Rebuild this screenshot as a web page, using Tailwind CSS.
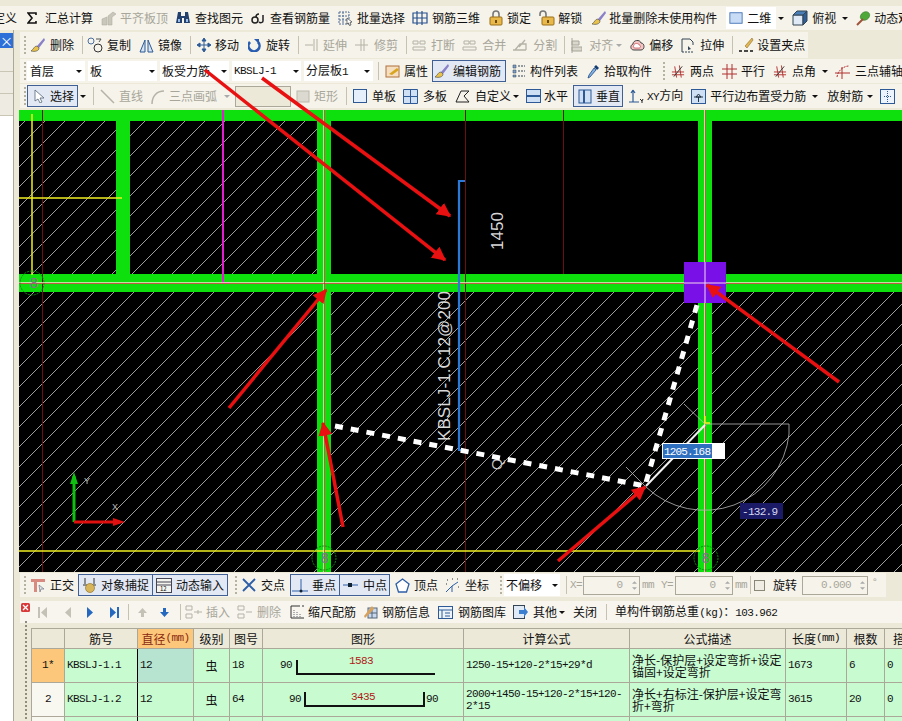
<!DOCTYPE html>
<html lang="zh">
<head>
<meta charset="utf-8">
<title>钢筋编辑</title>
<script src="https://cdn.jsdelivr.net/npm/@tailwindcss/browser@4"></script>
</head>
<body class="m-0">
<svg width="0" height="0" class="absolute">
  <defs>
    <symbol id="dd" viewBox="0 0 6 3"><path d="M0 0h6L3 3z" fill="#111"/></symbol>
    <symbol id="ddg" viewBox="0 0 6 3"><path d="M0 0h6L3 3z" fill="#aaa"/></symbol>
    <symbol id="brush" viewBox="0 0 16 16"><path d="M14 1 7 9l2 2 6-8z" fill="#8a80c8"/><path d="M7 9c-3 0-3 3-6 5 4 1 8 0 8-3z" fill="#e8c24a" stroke="#444" stroke-width=".6"/></symbol>
    <symbol id="lock" viewBox="0 0 16 16"><path d="M5 8V4a3 3 0 0 1 6 0v4" fill="none" stroke="#777" stroke-width="1.6"/><rect x="2" y="7" width="12" height="8" rx="1" fill="#e9b84a" stroke="#9a6f18"/><rect x="7" y="10" width="2" height="3" fill="#6b4b10"/></symbol>
    <symbol id="unlock" viewBox="0 0 16 16"><path d="M1 6V4a3 3 0 0 1 6 0v4" fill="none" stroke="#777" stroke-width="1.6"/><rect x="3" y="7" width="12" height="8" rx="1" fill="#e9b84a" stroke="#9a6f18"/><rect x="8" y="10" width="2" height="3" fill="#6b4b10"/></symbol>
    <symbol id="board" viewBox="0 0 16 16"><rect x="1" y="2" width="14" height="12" fill="#c9dcf6" stroke="#3d6fb4"/></symbol>
    <symbol id="cross" viewBox="0 0 15 15"><path d="M1 8h13M1 11h13M4 2l2 12M9 1l2 13" stroke="#b23030" fill="none"/><path d="M3 13 12 2" stroke="#333"/></symbol>
  </defs>
</svg>

<div class="relative w-[902px] h-[721px] overflow-hidden bg-[#ece9d8] text-[12px] leading-none text-[#111] font-['Noto_Sans_CJK_SC',sans-serif]">

  <!-- top toolbar -->
  <div class="mt-[6px] flex items-center h-[24px] bg-[#f5f3ea] whitespace-nowrap *:shrink-0">
    <span class="ml-[-7px]">定义</span>
    <svg class="ml-[10px] w-[10px] h-[12px]" viewBox="0 0 10 12"><path d="M9 3V1H1l4 5-4 5h8V9" fill="none" stroke="#111" stroke-width="1.6"/></svg>
    <span class="ml-[8px]">汇总计算</span>
    <svg class="ml-[8px] w-[16px] h-[16px]" viewBox="0 0 16 16"><path d="M1 15V9l5-2v8zM7 15V6l5-4 3 2-4 3v8z" fill="#c9c7bb" stroke="#a9a79a" stroke-width=".5"/></svg>
    <span class="ml-[3px] text-[#a8a69a]">平齐板顶</span>
    <svg class="ml-[7px] w-[16px] h-[16px]" viewBox="0 0 16 16"><path d="M3 2h3v4h4V2h3l2 11h-6V8H7v5H1z" fill="#23406f"/><path d="M3 9h2v3H3zM11 9h2v3h-2z" fill="#9bc0ee"/></svg>
    <span class="ml-[4px]">查找图元</span>
    <svg class="ml-[8px] w-[15px] h-[12px]" viewBox="0 0 15 12"><circle cx="4" cy="8" r="3" fill="none" stroke="#222" stroke-width="1.5"/><path d="M5 5c0-3 2-3 3-3M12 3v6c0 2-3 2-4 1" fill="none" stroke="#222" stroke-width="1.5"/></svg>
    <span class="ml-[4px]">查看钢筋量</span>
    <svg class="ml-[8px] w-[15px] h-[16px]" viewBox="0 0 15 16"><path d="M1 2h10v12H1zM1 6h10M1 10h10M5 2v12" fill="none" stroke="#556f96" stroke-dasharray="2 1"/><path d="m9 8 5 4-2 .5 1 2.500-1.500.5-1-2.500-1.500 1z" fill="#fff" stroke="#222" stroke-width=".6"/></svg>
    <span class="ml-[4px]">批量选择</span>
    <svg class="ml-[7px] w-[16px] h-[16px]" viewBox="0 0 16 16"><path d="M1 3h14v10H1zM5 1v14M10 1v14M1 8h14" fill="none" stroke="#27508e" stroke-width="1.200"/></svg>
    <span class="ml-[4px]">钢筋三维</span>
    <svg class="ml-[8px] w-[16px] h-[16px]"><use href="#lock"/></svg>
    <span class="ml-[3px]">锁定</span>
    <svg class="ml-[8px] w-[16px] h-[16px]"><use href="#unlock"/></svg>
    <span class="ml-[3px]">解锁</span>
    <svg class="ml-[9px] w-[16px] h-[16px]"><use href="#brush"/></svg>
    <span class="ml-[2px]">批量删除未使用构件</span>
    <div class="ml-[9px] w-[50px] h-[22px] bg-white flex items-center pl-[3px]">
      <svg class="w-[14px] h-[14px] shrink-0"><use href="#board"/></svg><span class="ml-[4px]">二维</span>
    </div>
    <svg class="ml-[2px] w-[6px] h-[3px]"><use href="#dd"/></svg>
    <svg class="ml-[8px] w-[16px] h-[16px]" viewBox="0 0 16 16"><path d="M1 5h10v10H1z" fill="#dfeaf6" stroke="#345"/><path d="m1 5 4-4h10l-4 4z" fill="#4a7fb8" stroke="#345"/><path d="m11 5 4-4v10l-4 4z" fill="#2f5f94" stroke="#345"/></svg>
    <span class="ml-[4px]">俯视</span>
    <svg class="ml-[6px] w-[6px] h-[3px]"><use href="#dd"/></svg>
    <svg class="ml-[8px] w-[15px] h-[16px]" viewBox="0 0 15 16"><ellipse cx="9" cy="6" rx="5" ry="4" transform="rotate(-35 9 6)" fill="#4fa83a" stroke="#2c6d22" stroke-width=".5"/><path d="m7 9-6 6" stroke="#a0523a" stroke-width="2"/></svg>
    <span class="ml-[3px]">动态观察</span>
  </div>

  <div class="flex">
    <!-- left side strip -->
    <aside class="w-[14px] h-[691px] shrink-0 border-r border-[#aca899] flex flex-col">
      <div class="mt-[3px] h-[15px] bg-[#2b6fd8] text-white flex items-center justify-center text-[13px]">×</div>
      <div class="mt-[2px] h-[22px] bg-[#eeece2] border-b border-[#c9c6b6]"></div>
      <div class="h-[22px] bg-[#eeece2] border-b border-[#c9c6b6]"></div>
      <div class="h-[22px] bg-[#eeece2] border-b border-[#c9c6b6]"></div>
      <div class="flex-1 bg-white"></div>
    </aside>

    <main class="pl-[5px] w-[888px] shrink-0">
      <!-- edit toolbar -->
      <div class="mt-[2px] ml-px w-[788px] h-[26px] bg-[#f5f3ea] flex items-center whitespace-nowrap *:shrink-0">
        <span class="ml-[4px] w-[2px] h-[18px] border-l-2 border-dotted border-[#b5b2a2]"></span>
        <svg class="ml-[4px] w-[16px] h-[16px]"><use href="#brush"/></svg>
        <span class="ml-[4px]">删除</span>
        <span class="ml-[8px] w-px h-[18px] bg-[#c5c2b2]"></span>
        <svg class="ml-[4px] w-[16px] h-[16px]" viewBox="0 0 16 16"><circle cx="4" cy="4" r="3" fill="none" stroke="#4a6fa0"/><circle cx="11" cy="11" r="4" fill="none" stroke="#333"/><path d="M9 2h5l-2 3" fill="none" stroke="#555"/></svg>
        <span class="ml-[4px]">复制</span>
        <svg class="ml-[8px] w-[15px] h-[15px]" viewBox="0 0 15 15"><path d="M6 2v12H1zM9 2v12h5z" fill="#d6e4f4" stroke="#2d5a96"/></svg>
        <span class="ml-[4px]">镜像</span>
        <span class="ml-[8px] w-px h-[18px] bg-[#c5c2b2]"></span>
        <svg class="ml-[6px] w-[14px] h-[14px]" viewBox="0 0 14 14"><path d="M7 1v12M1 7h12M7 0 5 3h4zM7 14l-2-3h4zM0 7l3-2v4zM14 7l-3-2v4z" fill="#2d5a96" stroke="#2d5a96"/></svg>
        <span class="ml-[4px]">移动</span>
        <svg class="ml-[9px] w-[13px] h-[14px]" viewBox="0 0 13 14"><path d="M2 4a5.500 5.500 0 1 0 8 0" fill="none" stroke="#2a5db0" stroke-width="2.600"/><path d="M6 1h5v5z" fill="#2a5db0"/></svg>
        <span class="ml-[5px]">旋转</span>
        <span class="ml-[8px] w-px h-[18px] bg-[#c5c2b2]"></span>
        <svg class="ml-[6px] w-[13px] h-[14px]" viewBox="0 0 13 14"><path d="M0 7h8M9 1v12M12 1v12" stroke="#b5b3a7" fill="none"/></svg>
        <span class="ml-[5px] text-[#a8a69a]">延伸</span>
        <svg class="ml-[8px] w-[13px] h-[14px]" viewBox="0 0 13 14"><path d="M0 7h13M6 1v12M9 1v12" stroke="#b5b3a7" fill="none"/></svg>
        <span class="ml-[6px] text-[#a8a69a]">修剪</span>
        <span class="ml-[8px] w-px h-[18px] bg-[#c5c2b2]"></span>
        <svg class="ml-[4px] w-[16px] h-[14px]" viewBox="0 0 16 14"><path d="M2 3h5v3H2zM9 3h5v3H9zM2 9h12v3H2z" fill="none" stroke="#b5b3a7"/></svg>
        <span class="ml-[4px] text-[#a8a69a]">打断</span>
        <svg class="ml-[7px] w-[15px] h-[14px]" viewBox="0 0 15 14"><path d="M2 3h5v3H2zM8 3h5v3H8zM1 9h13v3H1z" fill="none" stroke="#b5b3a7"/></svg>
        <span class="ml-[5px] text-[#a8a69a]">合并</span>
        <svg class="ml-[6px] w-[16px] h-[15px]" viewBox="0 0 16 15"><path d="M1 12h13M3 12l5-6h6v6M13 2 7 9" fill="none" stroke="#b5b3a7" stroke-width="1.300"/></svg>
        <span class="ml-[5px] text-[#a8a69a]">分割</span>
        <span class="ml-[7px] w-px h-[18px] bg-[#c5c2b2]"></span>
        <svg class="ml-[6px] w-[11px] h-[15px]" viewBox="0 0 11 15"><path d="M1 0v15M1 3h7v4H1zM1 9h10v4H1z" fill="#dad8cc" stroke="#a8a69a"/></svg>
        <span class="ml-[7px] text-[#a8a69a]">对齐</span>
        <svg class="ml-[3px] w-[6px] h-[3px]"><use href="#ddg"/></svg>
        <svg class="ml-[8px] w-[15px] h-[14px]" viewBox="0 0 15 14"><path d="M4 12C0 12 0 7 3 6c0-4 7-5 8-1 4 0 4 7 0 7z" fill="#f3c4c4" stroke="#444"/><path d="M5 10c-2 0-2-2-1-3 0-2 5-2 5 0 2 0 2 3 0 3z" fill="#fff" stroke="#b33" stroke-width=".6"/></svg>
        <span class="ml-[4px]">偏移</span>
        <svg class="ml-[8px] w-[15px] h-[15px]" viewBox="0 0 15 15"><path d="M1 14V1h8l3 3v3" fill="none" stroke="#345"/><path d="M1 14h12" stroke="#345" stroke-dasharray="2 1"/><path d="M7 8v4l3-1z" fill="#345"/></svg>
        <span class="ml-[4px]">拉伸</span>
        <span class="ml-[8px] w-px h-[18px] bg-[#c5c2b2]"></span>
        <svg class="ml-[5px] w-[16px] h-[16px]" viewBox="0 0 16 16"><path d="M14 1 7 9l2 2 6-8z" fill="#e3b650" stroke="#7a5d1a" stroke-width=".5"/><path d="M1 14h3M6 14h4M12 14h3" stroke="#111" stroke-width="1.600"/></svg>
        <span class="ml-[3px]">设置夹点</span>
      </div>

      <!-- selectors row -->
      <div class="mt-px ml-px h-[24px] flex items-center whitespace-nowrap *:shrink-0 bg-[#f5f3ea]">
        <span class="ml-[4px] w-[2px] h-[18px] border-l-2 border-dotted border-[#b5b2a2]"></span>
        <div class="ml-px w-[58px] h-[20px] bg-white flex items-center justify-between pl-[3px] pr-[3px]"><span>首层</span><svg class="w-[6px] h-[3px]"><use href="#dd"/></svg></div>
        <div class="ml-[3px] w-[69px] h-[20px] bg-white flex items-center justify-between pl-[2px] pr-[2px]"><span>板</span><svg class="w-[6px] h-[3px]"><use href="#dd"/></svg></div>
        <div class="ml-[3px] w-[69px] h-[20px] bg-white flex items-center justify-between pl-[2px] pr-[2px]"><span>板受力筋</span><svg class="w-[6px] h-[3px]"><use href="#dd"/></svg></div>
        <div class="ml-[3px] w-[69px] h-[20px] bg-white flex items-center justify-between pl-[2px] pr-[2px]"><span class="font-['Liberation_Mono'] text-[11px] tracking-[-0.6px]">KBSLJ-1</span><svg class="w-[6px] h-[3px]"><use href="#dd"/></svg></div>
        <div class="ml-[3px] w-[69px] h-[20px] bg-white flex items-center justify-between pl-[2px] pr-[3px]"><span>分层板<span class="font-['Liberation_Mono'] text-[11px]">1</span></span><svg class="w-[6px] h-[3px]"><use href="#dd"/></svg></div>
        <span class="ml-[5px] w-px h-[18px] bg-[#c5c2b2]"></span>
        <svg class="ml-[6px] w-[15px] h-[14px]" viewBox="0 0 15 14"><rect x="1" y="2" width="13" height="11" fill="#f6dfc0" stroke="#b0703a"/><path d="m4 10 8-6 2 2-7 5z" fill="#d9a520"/></svg>
        <span class="ml-[4px]">属性</span>
        <div class="ml-[4px] w-[74px] h-[22px] bg-[#e3e9f4] border border-[#3f5f95] flex items-center pl-[1px]">
          <svg class="w-[16px] h-[16px] shrink-0"><use href="#brush"/></svg><span class="ml-[3px]">编辑钢筋</span>
        </div>
        <svg class="ml-[6px] w-[14px] h-[14px]" viewBox="0 0 14 14"><path d="M1 1h3v3H1zM1 6h3v3H1zM1 11h3v2H1z" fill="#7f9fca" stroke="#345" stroke-width=".5"/><path d="M6 2h7M6 7h7M6 12h7" stroke="#345" stroke-dasharray="2 1" stroke-width="1.200"/></svg>
        <span class="ml-[4px]">构件列表</span>
        <svg class="ml-[9px] w-[13px] h-[15px]" viewBox="0 0 13 15"><path d="M9 1l3 3-2 2-3-3z" fill="#123c72"/><path d="M7 4l2 2-6 7-2 1 1-3z" fill="#7fb0e6" stroke="#123c72" stroke-width=".7"/></svg>
        <span class="ml-[4px]">拾取构件</span>
        <span class="ml-[11px] w-[2px] h-[18px] border-l-2 border-dotted border-[#b5b2a2]"></span>
        <svg class="ml-[6px] w-[14px] h-[15px]"><use href="#cross"/></svg>
        <span class="ml-[5px]">两点</span>
        <svg class="ml-[8px] w-[15px] h-[15px]" viewBox="0 0 15 15"><path d="M0 5h15M0 10h15M5 0v15M10 0v15" stroke="#b23030" fill="none"/></svg>
        <span class="ml-[4px]">平行</span>
        <svg class="ml-[8px] w-[14px] h-[15px]"><use href="#cross"/></svg>
        <span class="ml-[5px]">点角</span>
        <svg class="ml-[6px] w-[6px] h-[3px]"><use href="#dd"/></svg>
        <svg class="ml-[7px] w-[15px] h-[15px]" viewBox="0 0 15 15"><path d="M0 9h15M7 3v12" stroke="#b23030" fill="none"/><path d="M2 13C3 6 9 2 14 2" fill="none" stroke="#b23030" stroke-dasharray="2 1"/></svg>
        <span class="ml-[5px]">三点辅轴</span>
      </div>

      <!-- draw row -->
      <div class="mt-px ml-px h-[24px] flex items-center whitespace-nowrap *:shrink-0 bg-[#f5f3ea]">
        <span class="ml-[4px] w-[2px] h-[18px] border-l-2 border-dotted border-[#b5b2a2]"></span>
        <div class="ml-px w-[51px] h-[22px] bg-[#e3e9f4] border border-[#3f5f95] flex items-center pl-[5px]">
          <svg class="w-[13px] h-[14px] shrink-0" viewBox="0 0 13 14"><path d="M2 1v11l3-2 2 4 2-1-2-4h4z" fill="#fff" stroke="#567" stroke-width=".8"/></svg><span class="ml-[4px]">选择</span>
        </div>
        <svg class="ml-[2px] w-[6px] h-[3px]"><use href="#dd"/></svg>
        <span class="ml-[7px] w-px h-[18px] bg-[#c5c2b2]"></span>
        <svg class="ml-[6px] w-[15px] h-[15px]" viewBox="0 0 15 15"><path d="m1 1 13 13" stroke="#b5b3a7" stroke-width="1.500"/></svg>
        <span class="ml-[4px] text-[#a8a69a]">直线</span>
        <svg class="ml-[7px] w-[15px] h-[15px]" viewBox="0 0 15 15"><path d="M2 15C2 7 7 2 14 2" fill="none" stroke="#b5b3a7" stroke-width="1.500"/></svg>
        <span class="ml-[4px] text-[#a8a69a]">三点画弧</span>
        <svg class="ml-[7px] w-[6px] h-[3px]"><use href="#ddg"/></svg>
        <div class="ml-[5px] w-[56px] h-[21px] bg-[#ece9d8] border border-[#aca899]"></div>
        <svg class="ml-[5px] w-[14px] h-[13px]" viewBox="0 0 14 13"><rect x="1" y="1" width="12" height="11" fill="#dcdad0" stroke="#bbb9ad"/></svg>
        <span class="ml-[4px] text-[#a8a69a]">矩形</span>
        <span class="ml-[8px] w-px h-[18px] bg-[#c5c2b2]"></span>
        <svg class="ml-[6px] w-[14px] h-[14px]" viewBox="0 0 14 14"><rect x=".5" y=".5" width="13" height="13" fill="#e4effb" stroke="#2d5a96"/></svg>
        <span class="ml-[5px]">单板</span>
        <svg class="ml-[7px] w-[15px] h-[15px]" viewBox="0 0 15 15"><path d="M.5.5h14v14H.5zM7.500.5v14M.5 7.500h14" fill="#cfe0f5" stroke="#2d5a96"/></svg>
        <span class="ml-[5px]">多板</span>
        <svg class="ml-[8px] w-[15px] h-[13px]" viewBox="0 0 15 13"><path d="M6 1h8L9 6l5 6H1z" fill="none" stroke="#222"/></svg>
        <span class="ml-[5px]">自定义</span>
        <svg class="ml-[2px] w-[6px] h-[3px]"><use href="#dd"/></svg>
        <svg class="ml-[7px] w-[15px] h-[14px]" viewBox="0 0 15 14"><rect x=".5" y=".5" width="14" height="13" fill="#cfe0f5" stroke="#2d5a96"/><path d="M1 7h13" stroke="#2d5a96" stroke-width="2"/></svg>
        <span class="ml-[3px]">水平</span>
        <div class="ml-[5px] w-[50px] h-[22px] bg-[#e3e9f4] border border-[#3f5f95] flex items-center pl-[3px]">
          <svg class="w-[16px] h-[15px] shrink-0" viewBox="0 0 16 15"><rect x="2" y="1" width="12" height="13" fill="#cfe0f5" stroke="#2d5a96"/><path d="M7 1v13" stroke="#2d5a96" stroke-width="2"/></svg><span class="ml-[3px]">垂直</span>
        </div>
        <svg class="ml-[5px] w-[16px] h-[15px]" viewBox="0 0 16 15"><path d="M5 1v12M1 13h10M5 1 3 4M5 1l2 3" fill="none" stroke="#2d5a96" stroke-width="1.200"/><path d="m12 10 2 2 1-2M14 12v2" stroke="#222" fill="none"/></svg>
        <span class="ml-[3px]"><span class="font-['Liberation_Mono'] text-[11px] tracking-[-0.6px]">XY</span>方向</span>
        <svg class="ml-[8px] w-[15px] h-[15px]" viewBox="0 0 15 15"><rect x=".5" y=".5" width="14" height="14" fill="#cfe0f5" stroke="#2d5a96"/><path d="M3 8h9M7.500 5 5 8h5zM7.500 8v5" stroke="#234" fill="none"/></svg>
        <span class="ml-[4px]">平行边布置受力筋</span>
        <svg class="ml-[6px] w-[6px] h-[3px]"><use href="#dd"/></svg>
        <span class="ml-[9px]">放射筋</span>
        <svg class="ml-[4px] w-[6px] h-[3px]"><use href="#dd"/></svg>
        <svg class="ml-[7px] w-[15px] h-[15px]" viewBox="0 0 15 15"><rect x=".5" y=".5" width="14" height="14" fill="#eef4fb" stroke="#2d5a96"/><path d="M7.500 2v11M4 7.500h7" stroke="#2d5a96" stroke-dasharray="1 1"/></svg>
      </div>

      <!-- drawing canvas -->
      <svg class="mt-[2px] block w-[883px] h-[462px]" viewBox="19 110 883 462" font-family="Liberation Sans">
        <defs>
          <pattern id="hatch" width="20" height="20" patternUnits="userSpaceOnUse" x="5" y="1"><path d="M-1 21 21-1" stroke="#e4e4e4" stroke-width=".7"/></pattern>
        </defs>
        <rect x="19" y="110" width="883" height="462" fill="#000"/>
        <rect x="19" y="121" width="97" height="153" fill="url(#hatch)"/>
        <rect x="130" y="121" width="187" height="153" fill="url(#hatch)"/>
        <rect x="19" y="292" width="883" height="280" fill="url(#hatch)"/>
        <g fill="#0de00d">
          <rect x="19" y="110" width="883" height="11"/>
          <rect x="116" y="121" width="14" height="153"/>
          <rect x="19" y="274" width="883" height="18"/>
          <rect x="317" y="110" width="14" height="462"/>
          <rect x="698" y="110" width="14" height="462"/>
        </g>
        <path d="M42.500 110v462M465.500 110v462M563.500 110v164" stroke="#6a1010" fill="none"/>
        <path d="M32 114v161M19 198h103M19 551h681" stroke="#f0f020" stroke-width="1.500" fill="none"/>
        <path d="M223 110v173h7" stroke="#e020d0" stroke-width="2" fill="none"/>
        <path d="M19 283h883M324 110v462M705 110v462" stroke="#f4e8d0" stroke-width="1.500" fill="none"/>
        <path d="M19 283.500h883M324.500 110v462M705.500 110v462" stroke="#c02020" stroke-width=".7" fill="none"/>
        <rect x="684" y="262" width="42" height="41" fill="#7a10e8"/>
        <path d="M684 283h42M705 262v41" stroke="#f4d8e8" stroke-width="1"/>
        <path d="M465 181h-6v269h6" stroke="#2a78d8" stroke-width="2.200" fill="none"/>
        <text x="0" y="0" transform="translate(503 250) rotate(-90)" font-size="17" fill="#d8d8d8" textLength="38">1450</text>
        <text x="0" y="0" transform="translate(450 441) rotate(-90)" font-size="17" fill="#d8d8d8" textLength="150">KBSLJ-1.C12@200</text>
        <text x="0" y="0" transform="translate(502 470) rotate(-90)" font-size="15" fill="#c8c8c8">Q</text>
        <path d="M335 426 645 486 697 305" fill="none" stroke="#fff" stroke-width="5" stroke-dasharray="8 8"/>
        <g fill="none" stroke="#b8b8b8" stroke-width=".8">
          <path d="M705 424h84v10A85 85 0 0 1 646 487"/>
          <path d="M684 404l21 20M626 467l20 20"/>
        </g>
        <path d="M705 425 646 486" stroke="#f0f0f0" stroke-width="2"/>
        <path d="M705 416v7h5" stroke="#f0f020" stroke-width="1.500" fill="none"/>
        <rect x="662" y="443" width="63" height="16" fill="#fff"/>
        <rect x="663" y="444" width="49" height="14" fill="#2f6fc0"/>
        <text x="664" y="455" font-size="11" fill="#fff" font-family="Liberation Mono" textLength="47">1205.168</text>
        <rect x="740" y="503" width="43" height="16" fill="#1a1a66"/>
        <text x="742" y="515" font-size="11" fill="#d8d8f0" font-family="Liberation Mono" textLength="36">-132.9</text>
        <g fill="none" stroke="#108a10" stroke-dasharray="2 1"><circle cx="32" cy="283" r="12"/><circle cx="324" cy="558" r="12"/><circle cx="706" cy="558" r="12"/></g>
        <g font-size="14" fill="#8a6b90" font-family="Liberation Mono" text-anchor="middle"><text x="34" y="288">8</text><text x="325" y="563">8</text><text x="706" y="563">8</text></g>
        <path d="M74 522V476" stroke="#10c010" stroke-width="3"/><path d="M74 472l-4 12h8z" fill="#10c010"/>
        <path d="M74 522h46" stroke="#e01010" stroke-width="3"/><path d="M125 522l-12-4v8z" fill="#e01010"/>
        <text x="84" y="484" font-size="9" fill="#bbb">Y</text>
        <text x="112" y="510" font-size="9" fill="#bbb">X</text>
      </svg>

      <!-- snap toolbar -->
      <div class="mt-px ml-px w-[866px] h-[24px] flex items-center whitespace-nowrap *:shrink-0 bg-[#f5f3ea]">
        <span class="ml-[4px] w-[2px] h-[18px] border-l-2 border-dotted border-[#b5b2a2]"></span>
        <svg class="ml-[4px] w-[16px] h-[16px]" viewBox="0 0 16 16"><path d="M1 2h14v3H1zM4 5h3v10H4z" fill="#d88a80"/><path d="m9 8 5 4h-3l-1 3z" fill="#dfe5ec" stroke="#667" stroke-width=".6"/></svg>
        <span class="ml-[4px]">正交</span>
        <div class="ml-[4px] w-[75px] h-[22px] bg-[#e3e9f4] border border-[#3f5f95] flex items-center pl-[3px]">
          <svg class="w-[15px] h-[16px] shrink-0" viewBox="0 0 15 16"><path d="M3 1v6M12 1v6" stroke="#333"/><path d="M1 8h4M10 8h4" stroke="#333"/><circle cx="8" cy="11" r="4.500" fill="#d8b45a" stroke="#86691f" stroke-width=".6"/></svg><span class="ml-[4px]">对象捕捉</span>
        </div>
        <div class="w-[75px] h-[22px] bg-[#e3e9f4] border border-l-0 border-[#3f5f95] flex items-center pl-[3px]">
          <svg class="w-[16px] h-[15px] shrink-0" viewBox="0 0 16 15"><rect x=".5" y=".5" width="15" height="14" fill="#f4f4ee" stroke="#445"/><path d="M.5 4h15M.5 7h15" stroke="#445"/><text x="4" y="13" font-size="6" fill="#111">12</text></svg><span class="ml-[4px]">动态输入</span>
        </div>
        <span class="ml-[7px] w-[2px] h-[18px] border-l-2 border-dotted border-[#b5b2a2]"></span>
        <svg class="ml-[5px] w-[14px] h-[14px]" viewBox="0 0 14 14"><path d="m1 1 12 12M13 1 1 13" stroke="#2d5fa8" stroke-width="1.800"/></svg>
        <span class="ml-[5px]">交点</span>
        <div class="ml-[5px] w-[50px] h-[22px] bg-[#e3e9f4] border border-[#3f5f95] flex items-center pl-[1px]">
          <svg class="w-[16px] h-[15px] shrink-0" viewBox="0 0 16 15"><path d="M0 13h16M9 1v12" stroke="#2d5fa8" fill="none"/><circle cx="9" cy="13" r="1.500" fill="#123"/></svg><span class="ml-[4px]">垂点</span>
        </div>
        <div class="w-[50px] h-[22px] bg-[#e3e9f4] border border-l-0 border-[#3f5f95] flex items-center pl-[3px]">
          <svg class="w-[15px] h-[6px] shrink-0" viewBox="0 0 15 6"><path d="M0 3h15" stroke="#2d5fa8"/><rect x="5" y="1" width="4" height="4" fill="#123"/></svg><span class="ml-[5px]">中点</span>
        </div>
        <svg class="ml-[5px] w-[15px] h-[15px]" viewBox="0 0 15 15"><path d="M7.500 1 14 6l-2.500 8h-8L1 6z" fill="#fff" stroke="#2d5fa8" stroke-width="1.300"/></svg>
        <span class="ml-[4px]">顶点</span>
        <svg class="ml-[7px] w-[15px] h-[15px]" viewBox="0 0 15 15"><path d="M7 8v6M1 14l6-6 6-4" stroke="#2d5fa8" fill="none"/><path d="M2 2h1M7 1h1M12 1h1M1 6h1M13 9h1" stroke="#333"/></svg>
        <span class="ml-[5px]">坐标</span>
        <span class="ml-[11px] w-[2px] h-[18px] border-l-2 border-dotted border-[#b5b2a2]"></span>
        <div class="ml-[2px] w-[56px] h-[22px] bg-white flex items-center justify-between pl-[2px] pr-[2px]"><span>不偏移</span><svg class="w-[6px] h-[3px]"><use href="#dd"/></svg></div>
        <span class="ml-[6px] w-px h-[18px] bg-[#c5c2b2]"></span>
        <span class="ml-[3px] w-[12px] font-['Liberation_Mono'] text-[11px] tracking-[-0.6px] text-[#a8a69a]">X=</span>
        <div class="ml-px w-[57px] h-[19px] border border-[#aca899] flex items-center justify-end pr-[2px] text-[#a8a69a]"><span class="font-['Liberation_Mono'] text-[11px]">0</span><span class="ml-[9px] flex flex-col gap-[3px]"><svg class="w-[5px] h-[3px] rotate-180"><use href="#ddg"/></svg><svg class="w-[5px] h-[3px]"><use href="#ddg"/></svg></span></div>
        <span class="ml-[2px] w-[12px] font-['Liberation_Mono'] text-[11px] tracking-[-0.6px] text-[#a8a69a]">mm</span>
        <span class="ml-[7px] w-[12px] font-['Liberation_Mono'] text-[11px] tracking-[-0.6px] text-[#a8a69a]">Y=</span>
        <div class="ml-[2px] w-[58px] h-[19px] border border-[#aca899] flex items-center justify-end pr-[2px] text-[#a8a69a]"><span class="font-['Liberation_Mono'] text-[11px]">0</span><span class="ml-[9px] flex flex-col gap-[3px]"><svg class="w-[5px] h-[3px] rotate-180"><use href="#ddg"/></svg><svg class="w-[5px] h-[3px]"><use href="#ddg"/></svg></span></div>
        <span class="ml-[2px] w-[12px] font-['Liberation_Mono'] text-[11px] tracking-[-0.6px] text-[#a8a69a]">mm</span>
        <span class="ml-[3px] w-px h-[18px] bg-[#c5c2b2]"></span>
        <span class="ml-[3px] w-[11px] h-[11px] border border-[#8a8778] bg-[#f0eee4]"></span>
        <span class="ml-[8px]">旋转</span>
        <div class="ml-[5px] w-[66px] h-[19px] border border-[#aca899] flex items-center justify-end pr-[2px] text-[#a8a69a]"><span class="font-['Liberation_Mono'] text-[11px] tracking-[-0.6px]">0.000</span><span class="ml-[9px] flex flex-col gap-[3px]"><svg class="w-[5px] h-[3px] rotate-180"><use href="#ddg"/></svg><svg class="w-[5px] h-[3px]"><use href="#ddg"/></svg></span></div>
        <span class="ml-[5px] text-[#a8a69a] self-start mt-[4px] text-[10px]">°</span>
      </div>

      <!-- table toolbar -->
      <div class="mt-[4px] ml-px h-[22px] flex items-center whitespace-nowrap *:shrink-0 bg-[#f7f5ee]">
        <svg class="ml-px w-[9px] h-[9px] self-start mt-[2px]" viewBox="0 0 9 9"><rect width="9" height="9" rx="1.500" fill="#d83a3a"/><path d="m2 2 5 5M7 2 2 7" stroke="#fff" stroke-width="1.300"/></svg>
        <svg class="ml-[8px] w-[9px] h-[11px]" viewBox="0 0 9 11"><path d="M0 0h2v11H0zM9 0v11L3 5.500z" fill="#c4c2b6"/></svg>
        <svg class="ml-[18px] w-[6px] h-[11px]" viewBox="0 0 6 11"><path d="M6 0v11L0 5.500z" fill="#c4c2b6"/></svg>
        <svg class="ml-[16px] w-[6px] h-[11px]" viewBox="0 0 6 11"><path d="M0 0v11l6-5.500z" fill="#2468c0"/></svg>
        <svg class="ml-[17px] w-[9px] h-[11px]" viewBox="0 0 9 11"><path d="M0 0v11l6-5.500zM7 0h2v11H7z" fill="#2468c0"/></svg>
        <span class="ml-[9px] w-px h-[16px] bg-[#c5c2b2]"></span>
        <svg class="ml-[9px] w-[9px] h-[9px]" viewBox="0 0 9 9"><path d="M4.500 0 9 5H6v4H3V5H0z" fill="#c4c2b6"/></svg>
        <svg class="ml-[13px] w-[9px] h-[9px]" viewBox="0 0 9 9"><path d="M4.500 9 9 4H6V0H3v4H0z" fill="#2468c0"/></svg>
        <span class="ml-[11px] w-px h-[16px] bg-[#c5c2b2]"></span>
        <svg class="ml-[4px] w-[18px] h-[14px]" viewBox="0 0 18 14"><path d="M1 1h6v4H1zM1 9h6v4H1z" fill="none" stroke="#b5b3a7"/><path d="M9 7h8M13 5v4" stroke="#b5b3a7"/></svg>
        <span class="ml-[3px] text-[#a8a69a]">插入</span>
        <svg class="ml-[7px] w-[15px] h-[14px]" viewBox="0 0 15 14"><path d="M1 1h6v4H1zM1 9h6v4H1z" fill="none" stroke="#b5b3a7"/><path d="M9 7h6" stroke="#b5b3a7"/></svg>
        <span class="ml-[5px] text-[#a8a69a]">删除</span>
        <svg class="ml-[9px] w-[15px] h-[14px]" viewBox="0 0 15 14"><path d="M1 1v12h13M1 1h9M12 1h2" fill="none" stroke="#333"/><path d="M4 5v7M7 7v5M10 9v3" stroke="#667" stroke-dasharray="1 1"/></svg>
        <span class="ml-[3px]">缩尺配筋</span>
        <svg class="ml-[7px] w-[15px] h-[15px]" viewBox="0 0 15 15"><rect x="5" y="3" width="9" height="10" fill="#c8d8ee" stroke="#567"/><path d="M9 3v10M5 8h9" stroke="#567"/><path d="m9 1-8 10 1 2 9-9z" fill="#d8a25a"/></svg>
        <span class="ml-[4px]">钢筋信息</span>
        <svg class="ml-[8px] w-[15px] h-[13px]" viewBox="0 0 15 13"><rect x=".5" y=".5" width="14" height="12" fill="#eef3fa" stroke="#2d5a96"/><path d="M.5 4h14M4 4v8M7 7h5M7 10h5" stroke="#2d5a96"/></svg>
        <span class="ml-[5px]">钢筋图库</span>
        <svg class="ml-[7px] w-[15px] h-[14px]" viewBox="0 0 15 14"><rect x=".5" y=".5" width="11" height="13" fill="#dfeaf6" stroke="#345"/><path d="m6 5h5V2l4 5-4 5V9H6z" fill="#3c7fd0"/></svg>
        <span class="ml-[5px]">其他</span>
        <svg class="ml-[2px] w-[6px] h-[3px]"><use href="#dd"/></svg>
        <span class="ml-[8px]">关闭</span>
        <span class="ml-[9px] w-px h-[16px] bg-[#c5c2b2]"></span>
        <span class="ml-[8px]">单构件钢筋总重<span class="font-['Liberation_Mono'] text-[11px] tracking-[-0.6px]">(kg)</span>：<span class="font-['Liberation_Mono'] text-[11px] tracking-[-0.6px]">103.962</span></span>
      </div>

      <!-- table -->
      <div class="mt-[-2px] flex items-start">
        <span class="ml-[6px] w-[2px] h-[102px] border-l-2 border-dotted border-[#8f8d80]"></span>
        <div class="ml-[4px] mt-[7px] w-[888px] shrink-0 border-t border-l border-[#aca899] grid grid-cols-[33px_73px_56px_36px_33px_201px_166px_156px_61px_38px_30px] grid-rows-[20px_34px_34px_20px] bg-[#c8fbd0] *:border-r *:border-b *:border-[#aca899] *:flex *:items-center">
          <div class="bg-[#ece9d8]"></div>
          <div class="bg-[#ece9d8] justify-center">筋号</div>
          <div class="bg-[#fcc77a] justify-center text-[#8a2a10]">直径<span class="font-['Liberation_Mono'] text-[11px] tracking-[-0.6px]">(mm)</span></div>
          <div class="bg-[#ece9d8] justify-center">级别</div>
          <div class="bg-[#ece9d8] justify-center">图号</div>
          <div class="bg-[#ece9d8] justify-center">图形</div>
          <div class="bg-[#ece9d8] justify-center">计算公式</div>
          <div class="bg-[#ece9d8] justify-center">公式描述</div>
          <div class="bg-[#ece9d8] justify-center">长度<span class="font-['Liberation_Mono'] text-[11px] tracking-[-0.6px]">(mm)</span></div>
          <div class="bg-[#ece9d8] justify-center">根数</div>
          <div class="bg-[#ece9d8] pl-[8px] whitespace-nowrap">搭接</div>

          <div class="bg-[#fcc77a] justify-center font-['Liberation_Mono'] text-[11px] tracking-[-0.6px]">1*</div>
          <div class="pl-[2px] font-['Liberation_Mono'] text-[11px] tracking-[-0.6px] border-r-black!">KBSLJ-1.1</div>
          <div class="pl-[2px] font-['Liberation_Mono'] text-[11px] tracking-[-0.6px] bg-[#b7e4d0]">12</div>
          <div class="justify-center text-[12px]">虫</div>
          <div class="pl-[2px] font-['Liberation_Mono'] text-[11px] tracking-[-0.6px]">18</div>
          <div class="relative">
            <span class="ml-[17px] w-[13px] font-['Liberation_Mono'] text-[11px] tracking-[-0.6px]">90</span>
            <svg class="ml-[3px] w-[140px] h-[16px] mt-[2px]" viewBox="0 0 140 16"><path d="M1 1v14h138" fill="none" stroke="#111" stroke-width="2"/></svg>
            <span class="absolute left-[86px] top-[7px] text-[#b01818] font-['Liberation_Mono'] text-[11px] tracking-[-0.6px]">1583</span>
          </div>
          <div class="pl-[2px] font-['Liberation_Mono'] text-[11px] tracking-[-0.6px]">1250-15+120-2*15+29*d</div>
          <div class="pl-[2px] leading-[12px]">净长-保护层+设定弯折+设定锚固+设定弯折</div>
          <div class="pl-[2px] font-['Liberation_Mono'] text-[11px] tracking-[-0.6px]">1673</div>
          <div class="pl-[2px] font-['Liberation_Mono'] text-[11px] tracking-[-0.6px]">6</div>
          <div class="pl-[2px] font-['Liberation_Mono'] text-[11px] tracking-[-0.6px]">0</div>

          <div class="bg-[#f8f7f0] justify-center font-['Liberation_Mono'] text-[11px] tracking-[-0.6px]">2</div>
          <div class="pl-[2px] font-['Liberation_Mono'] text-[11px] tracking-[-0.6px] border-r-black!">KBSLJ-1.2</div>
          <div class="pl-[2px] font-['Liberation_Mono'] text-[11px] tracking-[-0.6px]">12</div>
          <div class="justify-center text-[12px]">虫</div>
          <div class="pl-[2px] font-['Liberation_Mono'] text-[11px] tracking-[-0.6px]">64</div>
          <div class="relative">
            <span class="ml-[26px] w-[13px] font-['Liberation_Mono'] text-[11px] tracking-[-0.6px]">90</span>
            <svg class="ml-[2px] w-[121px] h-[15px]" viewBox="0 0 121 15"><path d="M1 0v14h119V0" fill="none" stroke="#111" stroke-width="2"/></svg>
            <span class="ml-[1px] font-['Liberation_Mono'] text-[11px] tracking-[-0.6px]">90</span>
            <span class="absolute left-[88px] top-[9px] text-[#b01818] font-['Liberation_Mono'] text-[11px] tracking-[-0.6px]">3435</span>
          </div>
          <div class="pl-[2px] leading-[12px] font-['Liberation_Mono'] text-[11px] tracking-[-0.6px]">2000+1450-15+120-2*15+120-2*15</div>
          <div class="pl-[2px] leading-[12px]">净长+右标注-保护层+设定弯折+弯折</div>
          <div class="pl-[2px] font-['Liberation_Mono'] text-[11px] tracking-[-0.6px]">3615</div>
          <div class="pl-[2px] font-['Liberation_Mono'] text-[11px] tracking-[-0.6px]">20</div>
          <div class="pl-[2px] font-['Liberation_Mono'] text-[11px] tracking-[-0.6px]">0</div>

          <div class="bg-[#f8f7f0]"></div><div class="border-r-black!"></div><div></div><div></div><div></div><div></div><div></div><div></div><div></div><div></div><div></div>
        </div>
      </div>
    </main>
  </div>

  <!-- red annotation arrows drawn over the whole screenshot -->
  <svg class="absolute left-0 top-0 w-[902px] h-[721px] pointer-events-none" viewBox="0 0 902 721">
    <defs><marker id="ah" viewBox="0 0 10 10" refX="9" refY="5" markerWidth="4" markerHeight="4" orient="auto"><path d="M0 0 10 5 0 10z" fill="#e81010"/></marker></defs>
    <g stroke="#e81010" stroke-width="3.500" fill="none">
      <path d="M205 70 445 260" marker-end="url(#ah)"/>
      <path d="M262 78 450 216" marker-end="url(#ah)"/>
      <path d="M229 408 326 290" marker-end="url(#ah)"/>
      <path d="M343 527 323 423" marker-end="url(#ah)"/>
      <path d="M839 382 707 285" marker-end="url(#ah)"/>
      <path d="M558 561 645 487" marker-end="url(#ah)"/>
    </g>
  </svg>
</div>
</body>
</html>
